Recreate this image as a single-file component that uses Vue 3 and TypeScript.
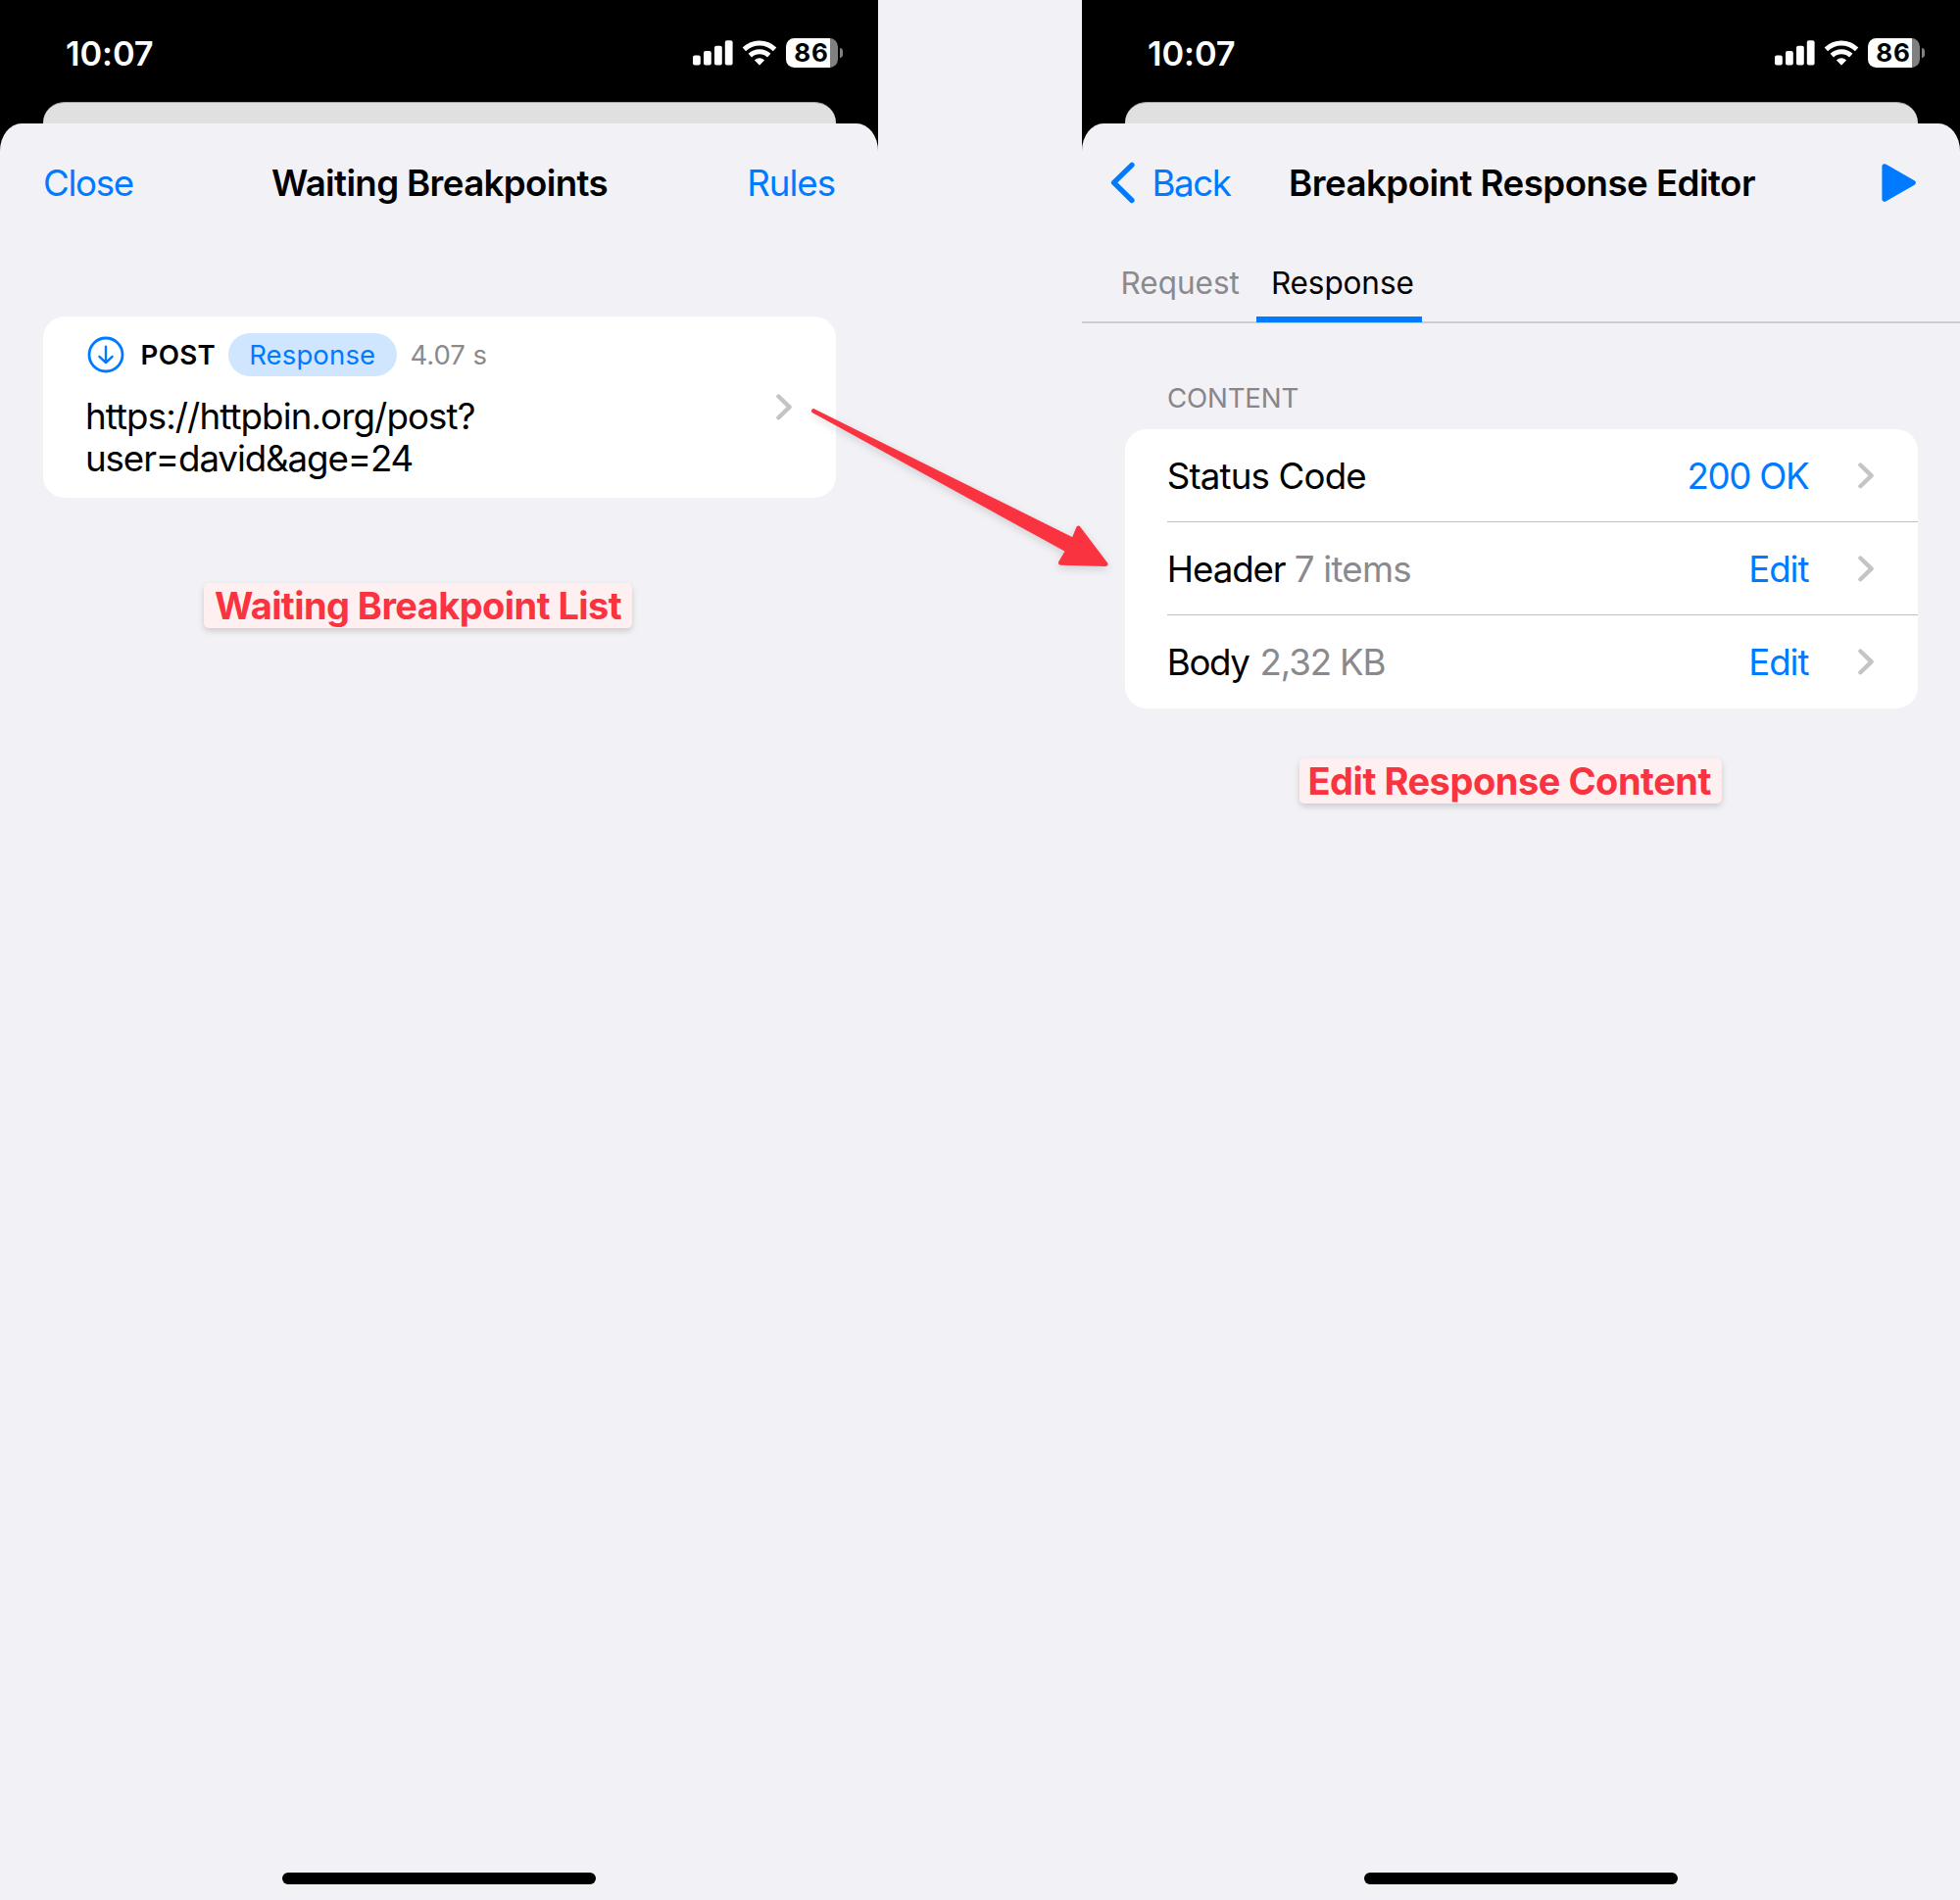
<script setup lang="ts">
interface Row {
  key: string
  label: string
  detail: string
  action: string
}

const rows: Row[] = [
  { key: 'row-status', label: 'Status Code', detail: '', action: '200 OK' },
  { key: 'row-header', label: 'Header', detail: '7 items', action: 'Edit' },
  { key: 'row-body', label: 'Body', detail: '2,32 KB', action: 'Edit' },
]

const screens = ['list', 'editor'] as const
</script>

<template>
  <main class="board">
    <section v-for="screen in screens" :key="screen" class="phone">
      <header class="status">
        <span class="time">10:07</span>
        <div class="indicators">
          <svg class="signal" width="41" height="26" viewBox="0 0 41 26" fill="#fff">
            <rect x="0" y="15.6" width="7.8" height="10" rx="2" />
            <rect x="11" y="11" width="7.8" height="14.6" rx="2" />
            <rect x="22" y="5.8" width="7.8" height="19.8" rx="2" />
            <rect x="32.8" y="0.2" width="7.8" height="25.4" rx="2" />
          </svg>
          <svg class="wifi" width="36" height="27" viewBox="0 0 36 27">
            <g fill="none" stroke="#fff" stroke-width="5">
              <path d="M2.4 9.4a22.5 22.5 0 0 1 31.2 0" />
              <path d="M8.3 15.6a14 14 0 0 1 19.4 0" />
            </g>
            <path d="M18 25.2 13.4 20.5a7 7 0 0 1 9.2 0Z" fill="#fff" stroke="#fff" stroke-width="1" stroke-linejoin="round" />
          </svg>
          <div class="battery"><span>86</span></div>
          <i class="nub"></i>
        </div>
      </header>
      <div class="behind"></div>

      <div class="sheet">
        <template v-if="screen === 'list'">
          <nav class="nav">
            <a class="close">Close</a>
            <h1 class="title-list">Waiting Breakpoints</h1>
            <a class="rules">Rules</a>
          </nav>
          <article class="card request">
            <div class="request-main">
              <div class="meta">
                <svg class="down" width="38" height="38" viewBox="0 0 38 38" fill="none" stroke="#007aff" stroke-linecap="round" stroke-linejoin="round">
                  <circle cx="19" cy="19" r="17" stroke-width="2.8" />
                  <path d="M19 10.8V27M12.4 20.8 19 27.1l6.6-6.3" stroke-width="2.4" />
                </svg>
                <strong>POST</strong>
                <span class="pill">Response</span>
                <span class="age">4.07 s</span>
              </div>
              <p class="url"><span class="host">https://httpbin.org/post?</span><span class="query">user=david&amp;age=24</span></p>
            </div>
            <svg class="chevron" width="16" height="27" viewBox="0 0 16 27"><path d="M2.4 2.5 13.6 13.4 2.4 24.3" /></svg>
          </article>
          <div class="note note-list">Waiting Breakpoint List</div>
        </template>

        <template v-else>
          <nav class="nav nav-editor">
            <a class="back">
              <svg width="26" height="43" viewBox="0 0 26 43"><path d="M22 3.300 3.600 21.400 22 39.500" fill="none" stroke="#007aff" stroke-width="5.3" stroke-linecap="round" stroke-linejoin="round" /></svg>
              Back
            </a>
            <h1 class="title-editor">Breakpoint Response Editor</h1>
            <svg class="play" width="37" height="41" viewBox="0 0 37 41"><path d="M4 3.8 33.2 20.5 4 37.2Z" fill="#007aff" stroke="#007aff" stroke-width="5.2" stroke-linejoin="round" /></svg>
          </nav>
          <div class="tabs">
            <span class="tab">Request</span>
            <span class="tab active">Response</span>
          </div>
          <h2>CONTENT</h2>
          <div class="card list">
            <div v-for="row in rows" :key="row.key" class="row" :class="row.key">
              <span class="label">{{ row.label }}</span>
              <span v-if="row.detail" class="detail">{{ row.detail }}</span>
              <a class="action">{{ row.action }}</a>
              <svg class="chevron" width="16" height="27" viewBox="0 0 16 27"><path d="M2.4 2.5 13.6 13.4 2.4 24.3" /></svg>
            </div>
          </div>
          <div class="note note-editor">Edit Response Content</div>
        </template>
        <div class="home"></div>
      </div>
    </section>

    <svg class="arrow" width="330" height="190" viewBox="820 405 330 190">
      <path d="M830.3 419.4 1095.5 551.2 1100.4 538.8 1128.2 575.7 1082.2 574.4 1089.7 561.7Z" />
    </svg>
  </main>
</template>

<style>
body {
  margin: 0;
  background: #f2f1f6;
}
</style>

<style scoped>
.board {
  position: relative;
  display: flex;
  justify-content: space-between;
  width: 2000px;
  height: 1939px;
  overflow: hidden;
  background: #f2f1f6;
  font-family: Inter, sans-serif;
  font-size: 36.7px;
  line-height: 45px;
  color: #000;
}
.board * {
  box-sizing: border-box;
}
.board span,
.board a,
.board h1,
.board strong {
  white-space: nowrap;
}
.phone {
  display: flex;
  flex-direction: column;
  width: 896px;
  height: 1939px;
  background: linear-gradient(#000 160px, #f2f1f6 160px);
}
.status {
  display: flex;
  justify-content: space-between;
  align-items: flex-start;
  height: 104px;
  padding: 34px 36px 0 67px;
}
.time {
  font-size: 34.4px;
  font-weight: 600;
  line-height: 41px;
  letter-spacing: -0.1px;
  color: #fff;
}
.indicators {
  display: flex;
  align-items: flex-start;
}
.signal {
  margin-top: 7.4px;
}
.wifi {
  margin: 6.5px 9px 0 8.7px;
}
.battery {
  width: 52.5px;
  height: 30px;
  margin-top: 5px;
  border-radius: 8.5px;
  background: linear-gradient(90deg, #fff 45px, #808080 45px);
  padding-left: 8.3px;
}
.battery span {
  display: block;
  font-size: 26px;
  font-weight: 700;
  line-height: 29px;
  letter-spacing: 0.8px;
}
.nub {
  width: 3.5px;
  height: 10px;
  margin: 15px 0 0 2px;
  border-radius: 0 4px 4px 0 / 0 5px 5px 0;
  background: #808080;
}
.behind {
  height: 22px;
  margin: 0 43px 0 44px;
  border-radius: 22px 22px 0 0 / 21px 21px 0 0;
  border-top: 1px solid #a8a8a8;
  background: #e0e0e0;
}
.sheet {
  display: flex;
  flex-direction: column;
  align-items: flex-start;
  flex: 1;
  padding-top: 38px;
  border-radius: 22px 22px 0 0 / 28px 28px 0 0;
  background: #f2f1f6;
}
.nav {
  display: grid;
  grid-template-columns: 1fr auto 1fr;
  width: 100%;
  height: 45px;
  padding: 0 44px;
}
.nav-editor {
  padding: 0 44px 0 29px;
  grid-template-columns: 182px auto 1fr;
}
a {
  color: #007aff;
}
h1 {
  margin: 0;
  font-size: 36.7px;
  font-weight: 600;
}
.close {
  letter-spacing: -1.35px;
}
.rules {
  justify-self: end;
  letter-spacing: -1.02px;
}
.title-list {
  padding-left: 1px;
  letter-spacing: -0.64px;
}
.title-editor {
  letter-spacing: -0.53px;
}
.back {
  display: flex;
  gap: 16.5px;
  letter-spacing: -1.4px;
}
.back svg {
  margin: 1px 0.5px 0 -0.5px;
}
.play {
  justify-self: end;
  margin-top: 2px;
}
.card {
  width: 809px;
  margin-left: 44px;
  border-radius: 22px;
  background: #fff;
}
.request {
  display: flex;
  justify-content: space-between;
  height: 185px;
  margin-top: 114px;
  padding: 17px 45px 0 43px;
}
.meta {
  display: flex;
  align-items: center;
  height: 44px;
  font-size: 27.5px;
  line-height: 34px;
}
.down {
  margin: 0 16.4px 0 2.2px;
}
.meta strong {
  font-size: 27.7px;
  font-weight: 600;
  letter-spacing: 0.28px;
}
.pill {
  height: 43.5px;
  margin: 0 13.7px 0 12.5px;
  padding: 5px 21.5px 0;
  border-radius: 22px;
  background: #d0e6ff;
  letter-spacing: 0.14px;
  color: #007aff;
}
.age {
  letter-spacing: 0;
  color: #8a8a8d;
}
.url {
  margin: 18px 0 0;
}
.url span {
  display: block;
}
.host {
  letter-spacing: -0.9px;
}
.query {
  margin-top: -2px;
  letter-spacing: -1.1px;
}
.chevron {
  flex: none;
  fill: none;
  stroke: #c4c4c6;
  stroke-width: 4.3px;
  stroke-linecap: round;
  stroke-linejoin: round;
}
.request .chevron {
  margin-top: 61.5px;
}
.note {
  height: 46px;
  border-radius: 5px;
  background: #fef0f0;
  box-shadow: 0 3px 6px rgba(0, 0, 0, 0.16);
  font-size: 38px;
  font-weight: 700;
  line-height: 46px;
  color: #fa3340;
  white-space: nowrap;
}
.note-list {
  width: 437px;
  margin: 87px 0 0 208px;
  padding-left: 11px;
  letter-spacing: -0.58px;
}
.note-editor {
  width: 431px;
  margin: 51px 0 0 222px;
  padding-left: 8.5px;
  letter-spacing: -0.47px;
}
.tabs {
  display: flex;
  width: 100%;
  height: 70px;
  margin-top: 51px;
  padding-left: 24.5px;
  border-bottom: 2px solid #cdcdd0;
  font-size: 31.5px;
}
.tab {
  height: 69px;
  padding: 9px 15px 0;
  line-height: 39px;
  color: #8a8a8e;
}
.tab.active {
  width: 169px;
  margin-left: 2px;
  padding-right: 0;
  border-bottom: 6px solid #007aff;
  letter-spacing: -0.1px;
  color: #000;
}
h2 {
  margin: 59px 0 15px 87px;
  font-size: 27.7px;
  font-weight: 400;
  line-height: 34px;
  letter-spacing: -0.2px;
  color: #86868b;
}
.list {
  height: 285px;
  padding-left: 43px;
}
.row {
  display: flex;
  height: 95px;
  padding: 25px 45px 0 0;
  border-bottom: 1px solid #c0c0c2;
}
.row:last-child {
  border-bottom: 0;
}
.label {
  margin-left: -0.2px;
  letter-spacing: -0.85px;
}
.row-header .label {
  margin-right: 9.2px;
  letter-spacing: -1.09px;
}
.row-body .label {
  margin-right: 11px;
  letter-spacing: -1.38px;
}
.detail {
  color: #8a8a8d;
}
.row-header .detail {
  letter-spacing: -0.77px;
}
.row-body .detail {
  letter-spacing: -1.16px;
}
.action {
  margin: 0 50.7px 0 auto;
  letter-spacing: -1.1px;
}
.row-status .action {
  letter-spacing: -1.3px;
}
.row .chevron {
  margin-top: 9.2px;
}
.home {
  width: 320px;
  height: 11.5px;
  margin: auto auto 16.5px;
  border-radius: 6px;
  background: #000;
}
.arrow {
  position: absolute;
  top: 405px;
  left: 820px;
  filter: drop-shadow(0 3px 4px rgba(0, 0, 0, 0.14));
}
.arrow path {
  fill: #fa3340;
  stroke: #fa3340;
  stroke-width: 4.5px;
  stroke-linejoin: round;
}
</style>
